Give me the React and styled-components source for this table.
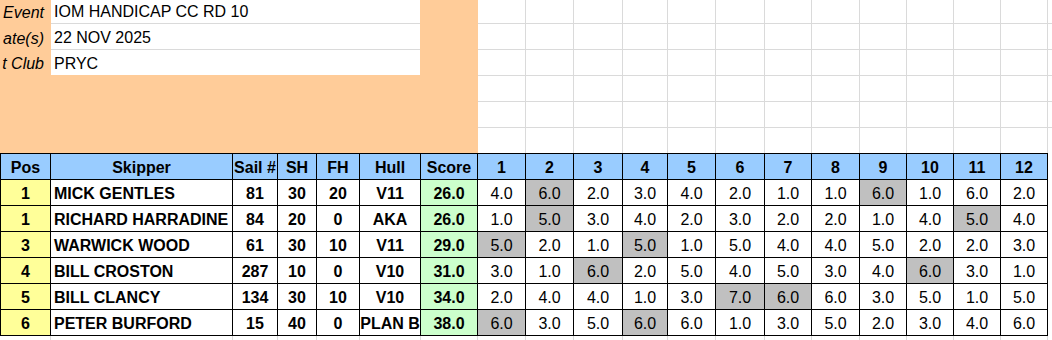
import React from 'react';
import styled, { createGlobalStyle } from 'styled-components';

const GlobalStyle = createGlobalStyle`
    *, *::before, *::after { box-sizing: border-box; }
    body {
        margin: 0;
        background: #fff;
        color: #000;
        font-family: "Liberation Sans", Arial, sans-serif;
        overflow: hidden;
    }
`;

// column widths in px, right border included
const INFO_WIDTHS = [50, 182, 45, 39, 43, 61, 57];
const RACE_WIDTHS = [48, 48, 49, 45, 48, 49, 47, 48, 47, 47, 47, 47];
const px = (list) => list.map(w => `${w}px`).join(' ');

const GRID_LINE = '#dadada';

const Sheet = styled.div`
    width: 1052px;
    display: flex;
    flex-direction: column;
`;

const TopArea = styled.div`
    display: flex;
    height: 153px;
`;

const EventPanel = styled.div`
    flex: none;
    width: 478px;
    background: #ffcc99;
    display: grid;
    grid-template-columns: 51px 369px;
    grid-template-rows: 24px 26px 25px;
    align-content: start;
`;

const InfoLabel = styled.div`
    display: flex;
    justify-content: flex-end;
    align-items: flex-end;
    padding: 0 7px 2px 0;
    font-size: 16px;
    line-height: 18px;
    font-style: italic;
    white-space: nowrap;
`;

const InfoValue = styled.div`
    display: flex;
    align-items: flex-end;
    padding: 0 0 2px 3px;
    background: #fff;
    border-bottom: ${p => p.$last ? 'none' : `1px solid ${GRID_LINE}`};
    font-size: 16px;
    line-height: 18px;
    white-space: nowrap;
`;

const BlankGrid = styled.div`
    flex: 1;
    display: grid;
    grid-template-columns: ${px(RACE_WIDTHS)} 1fr;
    grid-template-rows: 24px 26px 26px 26px 26px 25px;
`;

const BlankCell = styled.div`
    border-right: ${p => p.$edge ? 'none' : `1px solid ${GRID_LINE}`};
    border-bottom: ${p => p.$last ? 'none' : `1px solid ${GRID_LINE}`};
`;

const Table = styled.div`
    display: grid;
    grid-template-columns: ${px([...INFO_WIDTHS, ...RACE_WIDTHS])};
    width: 1048px;
    border-top: 1px solid #000;
    border-left: 1px solid #000;
`;

const Cell = styled.div`
    height: 26px;
    padding: 2px 0 0 ${p => p.$align === 'left' ? '3px' : '0'};
    border-right: 1px solid #000;
    border-bottom: 1px solid #000;
    background: ${p => p.$bg || '#fff'};
    font-size: 16px;
    line-height: 24px;
    font-weight: ${p => p.$bold ? 700 : 400};
    white-space: nowrap;
    display: flex;
    justify-content: ${p => p.$align === 'left' ? 'flex-start' : 'center'};
`;

const GridTail = styled.div`
    display: grid;
    grid-template-columns: ${px([...INFO_WIDTHS, ...RACE_WIDTHS])};
    height: 4px;
    padding-left: 1px;
`;

const TailCell = styled.div`
    border-right: 1px solid ${GRID_LINE};
`;

const COLORS = {
    header: '#99ccff',
    pos: '#ffff99',
    score: '#ccffcc',
    drop: '#c0c0c0',
};

// labels are shown as the sheet crops them
const info = [
    { label: 'Event', value: 'IOM HANDICAP CC RD 10' },
    { label: 'ate(s)', value: '22 NOV 2025' },
    { label: 't Club', value: 'PRYC' },
];

const results = [
    { pos: 1, name: 'MICK GENTLES', sail: 81, sh: 30, fh: 20, hull: 'V11', score: 26, races: [4, 6, 2, 3, 4, 2, 1, 1, 6, 1, 6, 2], drops: [1, 8] },
    { pos: 1, name: 'RICHARD HARRADINE', sail: 84, sh: 20, fh: 0, hull: 'AKA', score: 26, races: [1, 5, 3, 4, 2, 3, 2, 2, 1, 4, 5, 4], drops: [1, 10] },
    { pos: 3, name: 'WARWICK WOOD', sail: 61, sh: 30, fh: 10, hull: 'V11', score: 29, races: [5, 2, 1, 5, 1, 5, 4, 4, 5, 2, 2, 3], drops: [0, 3] },
    { pos: 4, name: 'BILL CROSTON', sail: 287, sh: 10, fh: 0, hull: 'V10', score: 31, races: [3, 1, 6, 2, 5, 4, 5, 3, 4, 6, 3, 1], drops: [2, 9] },
    { pos: 5, name: 'BILL CLANCY', sail: 134, sh: 30, fh: 10, hull: 'V10', score: 34, races: [2, 4, 4, 1, 3, 7, 6, 6, 3, 5, 1, 5], drops: [5, 6] },
    { pos: 6, name: 'PETER BURFORD', sail: 15, sh: 40, fh: 0, hull: 'PLAN B', score: 38, races: [6, 3, 5, 6, 6, 1, 3, 5, 2, 3, 4, 6], drops: [0, 3] },
];

const headers = ['Pos', 'Skipper', 'Sail #', 'SH', 'FH', 'Hull', 'Score', ...RACE_WIDTHS.map((_, i) => String(i + 1))];

const App = function () {
    const blankRows = 6;
    const blankCols = RACE_WIDTHS.length + 1;

    return (
        <Sheet>
            <GlobalStyle />
            <TopArea>
                <EventPanel>
                    {info.map((row, i) => (
                        <React.Fragment key={row.label}>
                            <InfoLabel>{row.label}</InfoLabel>
                            <InfoValue $last={i === info.length - 1}>{row.value}</InfoValue>
                        </React.Fragment>
                    ))}
                </EventPanel>
                <BlankGrid>
                    {Array.from({ length: blankRows * blankCols }, (_, i) => (
                        <BlankCell
                            key={i}
                            $edge={i % blankCols === blankCols - 1}
                            $last={i >= (blankRows - 1) * blankCols}
                        />
                    ))}
                </BlankGrid>
            </TopArea>

            <Table>
                {headers.map(h => (
                    <Cell key={h} $bg={COLORS.header} $bold>{h}</Cell>
                ))}
                {results.map(r => (
                    <React.Fragment key={r.name}>
                        <Cell $bg={COLORS.pos} $bold>{r.pos}</Cell>
                        <Cell $align="left" $bold>{r.name}</Cell>
                        <Cell $bold>{r.sail}</Cell>
                        <Cell $bold>{r.sh}</Cell>
                        <Cell $bold>{r.fh}</Cell>
                        <Cell $bold>{r.hull}</Cell>
                        <Cell $bg={COLORS.score} $bold>{r.score.toFixed(1)}</Cell>
                        {r.races.map((pts, i) => (
                            <Cell key={i} $bg={r.drops.includes(i) ? COLORS.drop : null}>
                                {pts.toFixed(1)}
                            </Cell>
                        ))}
                    </React.Fragment>
                ))}
            </Table>

            <GridTail>
                {headers.map(h => <TailCell key={h} />)}
            </GridTail>
        </Sheet>
    );
};

export default App;
